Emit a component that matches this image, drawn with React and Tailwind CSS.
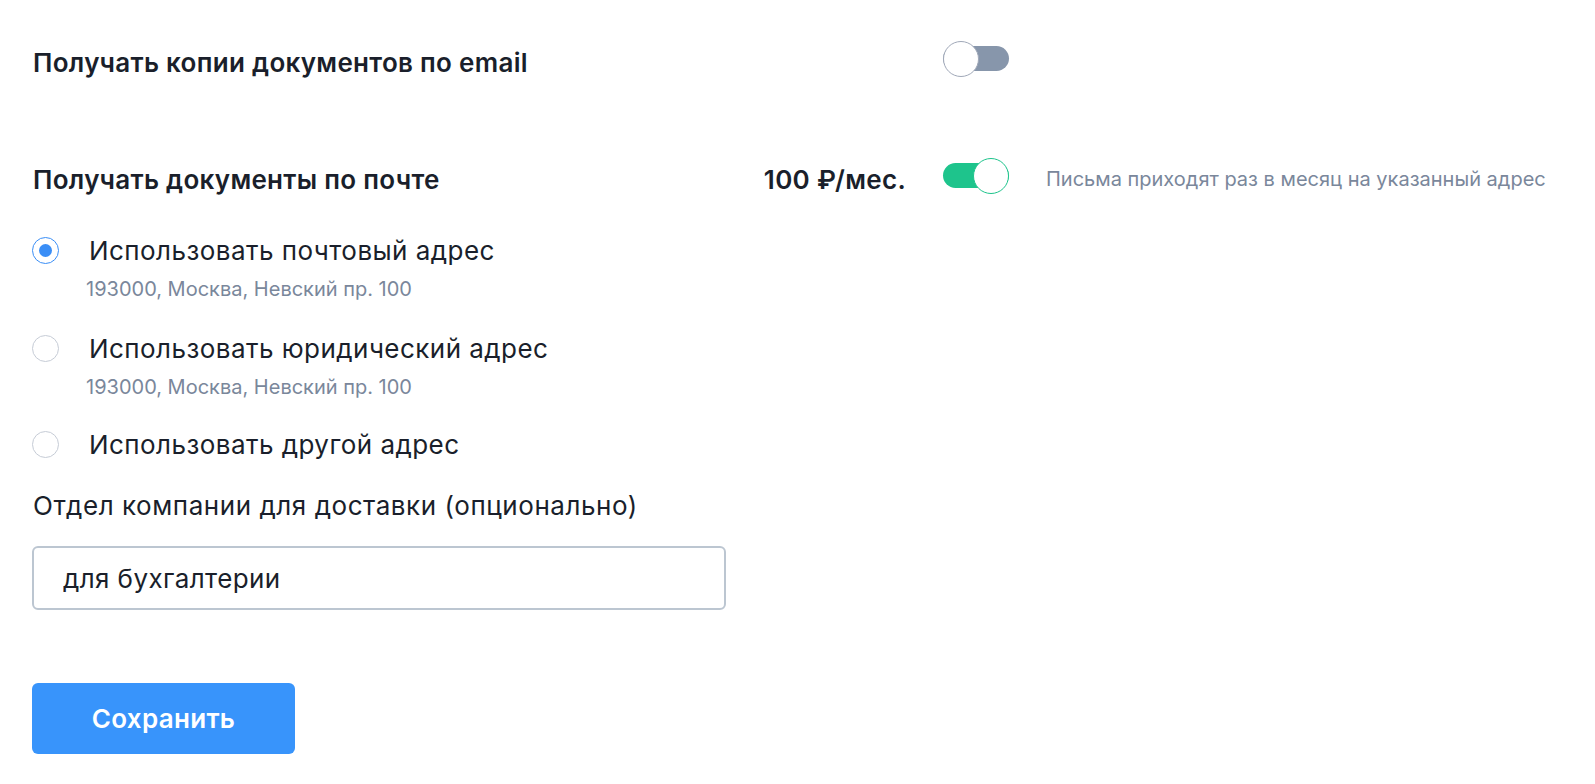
import React, { useState } from 'react';

const Toggle = ({ on, onChange }) => (
  <button
    type="button"
    onClick={onChange}
    className="relative w-[66px] h-[36px] shrink-0"
  >
    <span
      className={`absolute left-0 right-0 top-[5px] h-[25px] rounded-full ${on ? 'bg-[#1ec48c]' : 'bg-[#8796ab]'}`}
    />
    <span
      className={`absolute top-0 w-[36px] h-[36px] rounded-full bg-white border ${on ? 'right-0 border-[#1ec48c]' : 'left-0 border-[#a0a8b8]'}`}
    />
  </button>
);

const Radio = ({ checked, label, sub, onClick }) => (
  <div className="cursor-pointer" onClick={onClick}>
    <div className="flex items-center h-8">
      <span
        className={`w-[27px] h-[27px] rounded-full border flex items-center justify-center shrink-0 ${checked ? 'border-[#3a8ef6]' : 'border-[#c6ccd6]'}`}
      >
        {checked && <span className="w-[13px] h-[13px] rounded-full bg-[#3a8ef6]" />}
      </span>
      <span className="ml-[30px] text-[26px] tracking-[0.45px] text-[#1a1f2b]">{label}</span>
    </div>
    {sub && (
      <div className="ml-[54px] mt-[11px] h-6 leading-6 text-[20px] text-[#7a879b]">{sub}</div>
    )}
  </div>
);

export default function App() {
  const [emailCopies, setEmailCopies] = useState(false);
  const [postDocs, setPostDocs] = useState(true);
  const [addr, setAddr] = useState('post');
  const [dept, setDept] = useState('для бухгалтерии');

  return (
    <div className="bg-white min-h-screen pl-8 pt-[44px] text-[#1a1f2b]" style={{ fontFamily: 'Inter, "Noto Sans", sans-serif' }}>
      {/* email */}
      <div className="flex items-center h-[36px]">
        <div className="w-[874px] pl-[1px] text-[26px] tracking-[0.3px] font-semibold">Получать копии документов по email</div>
        <div className="ml-[37px]">
          <Toggle on={emailCopies} onChange={() => setEmailCopies(!emailCopies)} />
        </div>
      </div>

      {/* post */}
      <div className="flex items-center h-[36px] mt-[81px]">
        <div className="w-[874px] pl-[1px] flex justify-between text-[26px] tracking-[0.3px] font-semibold">
          <span>Получать документы по почте</span>
          <span>100 ₽/мес.</span>
        </div>
        <div className="ml-[37px]">
          <Toggle on={postDocs} onChange={() => setPostDocs(!postDocs)} />
        </div>
        <div className="ml-[37px] text-[20px] text-[#7a879b]">Письма приходят раз в месяц на указанный адрес</div>
      </div>

      <div className="mt-[37px]">
        <Radio
          checked={addr === 'post'}
          onClick={() => setAddr('post')}
          label="Использовать почтовый адрес"
          sub="193000, Москва, Невский пр. 100"
        />
        <div className="mt-[31px]">
          <Radio
            checked={addr === 'legal'}
            onClick={() => setAddr('legal')}
            label="Использовать юридический адрес"
            sub="193000, Москва, Невский пр. 100"
          />
        </div>
        <div className="mt-[29px]">
          <Radio checked={addr === 'other'} onClick={() => setAddr('other')} label="Использовать другой адрес" />
        </div>
      </div>

      <div className="mt-[30px] h-8 leading-8 pl-[1px] text-[26px] tracking-[0.55px]">Отдел компании для доставки (опционально)</div>
      <input
        value={dept}
        onChange={(e) => setDept(e.target.value)}
        className="mt-[24px] block w-[694px] h-[64px] border-2 border-[#bcc6d1] rounded-md px-[29px] text-[26px] tracking-[0.4px] text-[#1a1f2b] outline-none"
      />

      <button className="mt-[73px] w-[263px] h-[71px] rounded-md bg-[#3894fb] text-white text-[26px] tracking-[0.3px] font-semibold">
        Сохранить
      </button>
    </div>
  );
}
